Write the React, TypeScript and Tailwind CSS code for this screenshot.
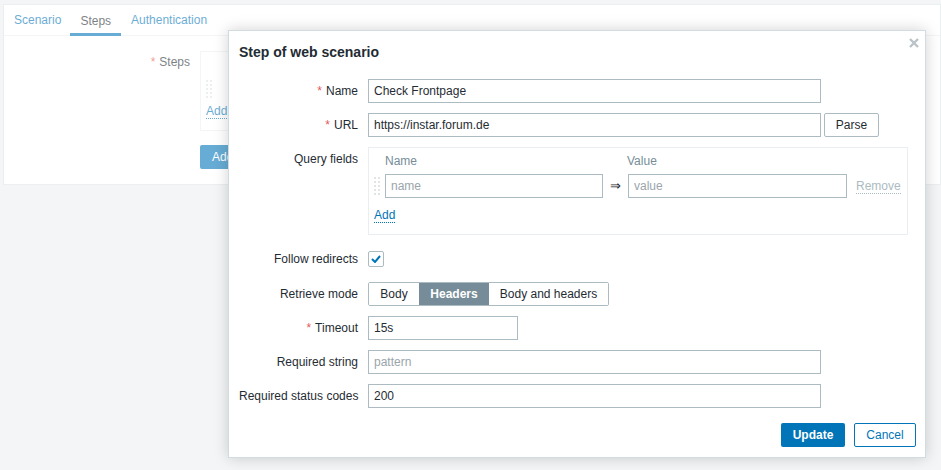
import { useState } from 'react'

const Star = () => <span className="text-[#e45959] mr-[4px]">*</span>

function DragHandle({ className = '' }: { className?: string }) {
  return (
    <svg width="6" height="18" viewBox="0 0 6 18" className={className}>
      {[0, 4, 8, 12, 16].map((y) => (
        <g key={y}>
          <rect x="0" y={y} width="2" height="2" fill="#dfe4e7" />
          <rect x="4" y={y} width="2" height="2" fill="#dfe4e7" />
        </g>
      ))}
    </svg>
  )
}

function Row({ label, required, children, className = '' }: { label: string; required?: boolean; children: React.ReactNode; className?: string }) {
  return (
    <div className={`flex items-center min-h-[24px] ${className}`}>
      <div className="w-[129px] pr-[10px] text-right shrink-0 whitespace-nowrap text-[#1f2c33]">
        {required && <Star />}
        {label}
      </div>
      <div className="flex items-center">{children}</div>
    </div>
  )
}

const inputCls =
  'h-[24px] border border-[#acbbc2] bg-white px-[5px] text-[12px] text-[#1f2c33] placeholder:text-[#9aa5ab] outline-none'

export default function App() {
  const [mode, setMode] = useState('Headers')

  return (
    <div className="relative w-[941px] h-[470px] overflow-hidden bg-[#ebeef0] font-['Liberation_Sans',Arial,sans-serif] text-[12px]">
      {/* background page */}
      <div className="pt-[4px] pl-[3px]">
        <div className="bg-white border border-[#dfe4e7] h-[181px]">
          <div className="flex h-[31px] border-b border-[#ebeef0] pl-[1px]">
            <div className="px-[9px] flex items-center text-[#0275b8]">Scenario</div>
            <div className="px-[10px] flex items-center text-[#1f2c33] border-b-[3px] border-[#0275b8] pt-[3px] -mb-[1px]">Steps</div>
            <div className="px-[10px] flex items-center text-[#0275b8]">Authentication</div>
          </div>
          <div className="flex pt-[15px]">
            <div className="w-[196px] text-right pr-[10px] text-[#1f2c33] pt-[2px]">
              <Star />
              Steps
            </div>
            <div>
              <div className="w-[120px] h-[80px] border border-[#ebeef0] pl-[5px] pt-[28px]">
                <DragHandle />
                <span className="block mt-[6px] text-[#0275b8] border-b border-dotted border-[#0275b8] w-fit leading-[14px]">Add</span>
              </div>
              <button className="mt-[14px] h-[24px] px-[12px] bg-[#0275b8] text-white rounded-[2px] w-[80px] text-left">Add</button>
            </div>
          </div>
        </div>
      </div>

      {/* overlay */}
      <div className="absolute inset-0 bg-white/40" />

      {/* dialog */}
      <div className="absolute left-[228px] top-[30px] w-[698px] h-[428px] bg-white border border-[#d2dbe0] shadow-[0_0_14px_rgba(0,0,0,0.18)]">
        <div className="relative h-[42px] pl-[10px] flex items-end pb-[10px]">
          <h2 className="text-[14px] font-bold text-[#1f2c33]">Step of web scenario</h2>
          <svg className="absolute right-[6px] top-[7px]" width="10" height="10" viewBox="0 0 10 10">
            <path d="M1 1 L9 9 M9 1 L1 9" stroke="#b9c3c8" strokeWidth="2.4" />
          </svg>
        </div>

        <div className="pl-[10px] pt-[6px] flex flex-col">
          <Row label="Name" required>
            <input className={`${inputCls} w-[453px] border-[#1f65a6]`} defaultValue="Check Frontpage" />
          </Row>
          <Row label="URL" required className="mt-[10px]">
            <input className={`${inputCls} w-[453px]`} defaultValue="https://instar.forum.de" />
            <button className="ml-[3px] h-[24px] w-[55px] border border-[#acbbc2] rounded-[2px] bg-white text-[#1f2c33]">Parse</button>
          </Row>

          <div className="flex mt-[10px]">
            <div className="w-[129px] pr-[10px] text-right shrink-0 text-[#1f2c33] pt-[3px]">Query fields</div>
            <div className="w-[540px] h-[88px] border border-[#ebeef0] pl-[5px] pt-[5px]">
              <div className="flex text-[#768d99] pl-[11px] h-[15px] items-center">
                <span className="w-[242px]">Name</span>
                <span>Value</span>
              </div>
              <div className="flex items-center mt-[6px]">
                <DragHandle className="mr-[5px]" />
                <input className={`${inputCls} w-[218px]`} placeholder="name" />
                <span className="w-[25px] text-center text-[#1f2c33] text-[13px]">⇒</span>
                <input className={`${inputCls} w-[219px]`} placeholder="value" />
                <span className="ml-[9px] text-[#acbbc2] border-b border-dotted border-[#acbbc2] leading-[14px]">Remove</span>
              </div>
              <span className="block mt-[10px] text-[#0275b8] border-b border-dotted border-[#0275b8] w-fit leading-[14px]">Add</span>
            </div>
          </div>

          <Row label="Follow redirects" className="mt-[12px]">
            <div className="w-[16px] h-[16px] border border-[#acbbc2] rounded-[2px] flex items-center justify-center bg-white">
              <svg width="10" height="8" viewBox="0 0 10 8">
                <path d="M1 4 L4 7 L9 1" stroke="#0275b8" strokeWidth="2" fill="none" />
              </svg>
            </div>
          </Row>

          <Row label="Retrieve mode" className="mt-[11px]">
            <div className="flex h-[24px] border border-[#acbbc2] rounded-[2px] overflow-hidden">
              {[
                ['Body', 'w-[50px]'],
                ['Headers', 'w-[70px]'],
                ['Body and headers', 'w-[119px]'],
              ].map(([m, w]) => (
                <button
                  key={m}
                  onClick={() => setMode(m)}
                  className={`${w} h-full ${mode === m ? 'bg-[#768d99] text-white font-bold' : 'bg-white text-[#1f2c33]'}`}
                >
                  {m}
                </button>
              ))}
            </div>
          </Row>

          <Row label="Timeout" required className="mt-[10px]">
            <input className={`${inputCls} w-[150px]`} defaultValue="15s" />
          </Row>
          <Row label="Required string" className="mt-[10px]">
            <input className={`${inputCls} w-[453px]`} placeholder="pattern" />
          </Row>
          <Row label="Required status codes" className="mt-[10px]">
            <input className={`${inputCls} w-[453px]`} defaultValue="200" />
          </Row>

          <div className="flex justify-end gap-[9px] mt-[15px] pr-[9px]">
            <button className="h-[24px] w-[64px] bg-[#0275b8] text-white font-bold rounded-[2px]">Update</button>
            <button className="h-[24px] w-[62px] border border-[#0275b8] text-[#0275b8] bg-white rounded-[2px]">Cancel</button>
          </div>
        </div>
      </div>
    </div>
  )
}
